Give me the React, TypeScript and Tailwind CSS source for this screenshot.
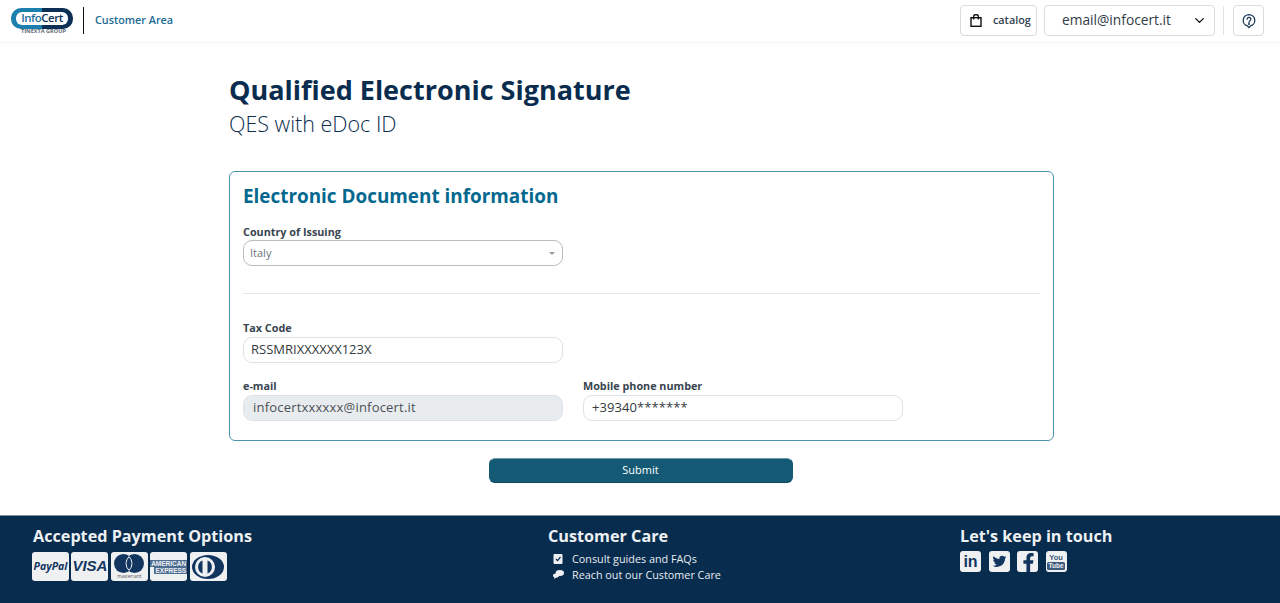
import React from "react";
import { ChevronDown } from "lucide-react";
import { FaFacebookF } from "react-icons/fa";

const Field: React.FC<{ label: string; value: string; inputClass: string }> = ({ label, value, inputClass }) => (
  <div className="w-[320px]">
    <label className="block text-[10.8px] leading-[15px] font-bold text-[#38444f]">{label}</label>
    <div className={`mt-[2px] h-[26px] rounded-[9px] border flex items-center text-[13px] ${inputClass}`}>{value}</div>
  </div>
);

const PayCard: React.FC<{ children: React.ReactNode }> = ({ children }) => (
  <div className="w-[37px] h-[29px] rounded-[3px] bg-[#eff0f2] flex items-center justify-center overflow-hidden">
    {children}
  </div>
);

const Social: React.FC<{ children: React.ReactNode }> = ({ children }) => (
  <div className="w-[21px] h-[21px] rounded-[3px] bg-[#eff0f2] flex items-center justify-center overflow-hidden">
    {children}
  </div>
);

const Logo = () => (
  <div className="relative w-[64px] h-[36px]">
    <div className="absolute left-[11px] top-[5px] w-[62px] h-[21px] rounded-[10px] bg-[linear-gradient(90deg,#1c7fae_0%,#1c7fae_50%,#0b2f55_50%,#0b2f55_100%)]" />
    <div className="absolute left-[16px] top-[9px] w-[52px] h-[13px] rounded-[6px] bg-white flex items-center justify-center text-[11.5px] tracking-[-0.5px] leading-none font-semibold whitespace-nowrap">
      <span className="text-[#1c6f9c]">Info</span>
      <span className="text-[#0b2f55]">Cert</span>
    </div>
    <div className="absolute left-[21px] top-[24px] text-[5.6px] leading-[8px] font-bold text-[#5f6b75] whitespace-nowrap">
      TINEXTA GROUP
    </div>
  </div>
);

export default function App() {
  return (
    <div className="min-h-[603px] flex flex-col bg-white font-['Open_Sans',sans-serif]">
      <header className="h-[41px] flex items-center bg-white shadow-[0_2px_4px_rgba(0,0,0,0.04)]">
        <div className="w-[83px]">
          <Logo />
        </div>
        <div className="w-px h-[27px] bg-[#111]" />
        <span className="ml-[11px] text-[10.8px] font-semibold text-[#1d6a94]">Customer Area</span>
        <div className="ml-auto flex items-center pr-[16px]">
          <button className="w-[77px] h-[31px] rounded-[4px] border border-[#d5dde3] flex items-center pl-[9px] text-[10.8px] font-semibold text-[#33414e]">
            <svg width="12" height="13" viewBox="0 0 12 13" fill="none" stroke="#111" strokeWidth="1.4">
              <rect x="1" y="3.7" width="10" height="8.6" />
              <path d="M3.6 5.5V2.4a1.7 1.7 0 0 1 1.7-1.7h1.4a1.7 1.7 0 0 1 1.7 1.7v3.1" />
            </svg>
            <span className="ml-[11px]">catalog</span>
          </button>
          <button className="ml-[7px] w-[171px] h-[31px] rounded-[4px] border border-[#d5dde3] flex items-center pl-[17px] text-[13.75px] text-[#2f3c48]">
            email@infocert.it
            <ChevronDown className="ml-auto mr-[7px] w-[15px] h-[15px] text-[#111]" strokeWidth={2.2} />
          </button>
          <div className="ml-[8px] w-px h-[29px] bg-[#dfe4e8]" />
          <button className="ml-[9px] w-[31px] h-[31px] rounded-[4px] border border-[#d5dde3] flex items-center justify-center">
            <svg width="14" height="16" viewBox="0 0 16 17" fill="none" stroke="#1d3b5a" strokeWidth="1.5">
              <path d="M8 1.2a6.6 6.6 0 0 1 1.6 13l-1.6 1.8-1.6-1.8A6.6 6.6 0 0 1 8 1.2z" />
              <path d="M5.9 6.4a2.1 2.1 0 1 1 3.2 1.8c-.7.4-1.1.8-1.1 1.7" strokeLinecap="round" />
              <circle cx="8" cy="11.9" r=".5" fill="#1d3b5a" />
            </svg>
          </button>
        </div>
      </header>

      <main className="flex-1 w-[825px] ml-[229px]">
        <h1 className="mt-[30px] text-[27px] leading-[38px] font-bold text-[#0a2c4e]">Qualified Electronic Signature</h1>
        <h2 className="text-[21.5px] leading-[30px] font-light text-[#0a2c4e]">QES with eDoc ID</h2>

        <section className="mt-[32px] h-[270px] rounded-[6px] border border-[#4a94ae] px-[13px]">
          <h3 className="mt-[10px] text-[18.9px] leading-[28px] font-bold text-[#04688f]">Electronic Document information</h3>
          <div className="mt-[14px] w-[320px]">
            <label className="block text-[10.8px] leading-[15px] font-bold text-[#38444f]">Country of Issuing</label>
            <div className="mt-[1px] h-[26px] rounded-[9px] border border-[#bdbdbd] flex items-center pl-[6px] pr-[7px] text-[11px] text-[#6c757d]">
              Italy
              <span className="ml-auto w-0 h-0 border-x-[3.5px] border-x-transparent border-t-[3.5px] border-t-[#9a9a9a]" />
            </div>
          </div>
          <hr className="mt-[27px] border-[#e6e8ea]" />
          <div className="mt-[26px]">
            <Field label="Tax Code" value="RSSMRIXXXXXX123X" inputClass="bg-white border-[#dee2e6] text-[#343a40] pl-[7px]" />
          </div>
          <div className="mt-[15px] flex gap-[20px]">
            <Field
              label="e-mail"
              value="infocertxxxxxx@infocert.it"
              inputClass="bg-[#e9ecef] border-[#dee2e6] text-[#495057] pl-[9px] tracking-[0.2px]"
            />
            <Field
              label="Mobile phone number"
              value="+39340*******"
              inputClass="bg-white border-[#dee2e6] text-[#343a40] pl-[8px] tracking-[0.08px]"
            />
          </div>
        </section>

        <div className="mt-[17px] flex justify-center pr-[2px]">
          <button className="w-[304px] h-[25px] rounded-[6px] bg-[#155a75] border border-[#155a75] border-t-[#6f97a8] border-b-[#0f4a63] text-white text-[11px] font-medium">
            Submit
          </button>
        </div>
      </main>

      <footer className="h-[88px] bg-[#082c4e] border-t border-[#8593a0] text-white relative flex">
        <div className="ml-[32px] w-[516px] pt-[9px]">
          <div className="pl-[1px] text-[16.2px] leading-[22px] font-bold text-[#eef1f4]">Accepted Payment Options</div>
          <div className="mt-[5px] flex gap-[2.4px]">
            <PayCard>
              <span className="text-[10.5px] italic font-bold text-[#12355f]">PayPal</span>
            </PayCard>
            <PayCard>
              <span className="font-['Liberation_Sans',sans-serif] text-[15px] italic font-bold text-[#12355f]">VISA</span>
            </PayCard>
            <PayCard>
              <div className="flex flex-col items-center">
                <svg width="30" height="19" viewBox="0 0 30 19">
                  <circle cx="9.5" cy="9.5" r="9.5" fill="#12355f" />
                  <circle cx="20.5" cy="9.5" r="9.5" fill="#12355f" />
                  <path d="M15 2.6a9.500 9.500 0 0 1 0 13.800a9.500 9.500 0 0 1 0-13.800z" fill="#12355f" stroke="#eff0f2" strokeWidth="1" />
                </svg>
                <span className="text-[4.5px] leading-[6px] text-[#555]">mastercard</span>
              </div>
            </PayCard>
            <PayCard>
              <div className="flex flex-col font-['Liberation_Sans',sans-serif] text-[6.5px] leading-[7px] text-[#eff0f2] font-bold">
                <span className="bg-[#4d6d92] px-[1px]">AMERICAN</span>
                <span className="self-end bg-[#4d6d92] px-[1px]">EXPRESS</span>
              </div>
            </PayCard>
            <PayCard>
              <svg width="32" height="24" viewBox="0 0 32 24">
                <ellipse cx="16" cy="12" rx="16" ry="12" fill="#12355f" />
                <circle cx="13" cy="12" r="10" fill="#eff0f2" />
                <path d="M10.5 5.5a7 7 0 0 0 0 13z" fill="#12355f" />
                <path d="M15.5 5.5a7 7 0 0 1 0 13z" fill="#12355f" />
              </svg>
            </PayCard>
          </div>
        </div>

        <div className="w-[412px] pt-[9px]">
          <div className="text-[16.2px] leading-[22px] font-bold text-[#eef1f4]">Customer Care</div>
          <div className="mt-[4px] flex items-center text-[10.8px] leading-[16px] text-[#e8edf1]">
            <svg className="ml-[5px] mr-[8px] -mt-[2px]" width="11" height="11" viewBox="0 0 11 11">
              <rect x="0.5" y="1" width="9" height="10" rx="1" fill="#eef1f4" />
              <path d="M3 6l1.6 1.6L7.5 4" fill="none" stroke="#082c4e" strokeWidth="1.2" />
            </svg>
            Consult guides and FAQs
          </div>
          <div className="flex items-center text-[10.8px] leading-[16px] text-[#e8edf1]">
            <svg className="ml-[5px] mr-[8px] -mt-[2px]" width="11" height="9" viewBox="0 0 11 9">
              <ellipse cx="6.8" cy="3" rx="4.2" ry="3" fill="#eef1f4" />
              <ellipse cx="3" cy="5.4" rx="3" ry="2" fill="#eef1f4" />
              <path d="M1.5 6.5L1 9l3-2z" fill="#eef1f4" />
            </svg>
            Reach out our Customer Care
          </div>
        </div>

        <div className="pt-[9px]">
          <div className="text-[16.2px] leading-[22px] font-bold text-[#eef1f4]">Let's keep in touch</div>
          <div className="mt-[4px] flex gap-[7.5px]">
            <Social>
              <span className="font-['Liberation_Sans',sans-serif] text-[16px] font-bold text-[#12355f] leading-none">in</span>
            </Social>
            <Social>
              <svg width="17" height="15" viewBox="0 0 24 24" fill="#12355f">
                <path d="M23 4.900a9 9 0 0 1-2.600.7 4.500 4.500 0 0 0 2-2.500 9 9 0 0 1-2.900 1.100 4.500 4.500 0 0 0-7.700 4.100A12.800 12.800 0 0 1 2.500 3.600a4.500 4.500 0 0 0 1.400 6 4.500 4.500 0 0 1-2-.6v.1a4.500 4.500 0 0 0 3.600 4.400 4.500 4.500 0 0 1-2 .1 4.500 4.500 0 0 0 4.200 3.100A9 9 0 0 1 1 18.600 12.800 12.800 0 0 0 7.900 20.600c8.300 0 12.900-6.900 12.900-12.900v-.6A9 9 0 0 0 23 4.900z" />
              </svg>
            </Social>
            <Social>
              <FaFacebookF className="w-[19px] h-[19px] mt-[2px] ml-[2px] text-[#12355f]" />
            </Social>
            <Social>
              <div className="flex flex-col items-center font-['Liberation_Sans',sans-serif] leading-none text-[#3f5b7c]">
                <span className="text-[7.5px] font-bold leading-[8px]">You</span>
                <span className="text-[6.5px] font-bold leading-[8px] bg-[#3f5b7c] text-[#eff0f2] px-[1.5px] rounded-[1.5px]">Tube</span>
              </div>
            </Social>
          </div>
        </div>
      </footer>
    </div>
  );
}
